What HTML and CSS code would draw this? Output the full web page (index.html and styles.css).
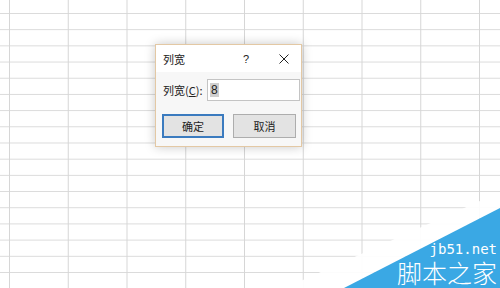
FILE: index.html
```html
<!DOCTYPE html>
<html>
<head>
<meta charset="utf-8">
<link rel="stylesheet" href="styles.css">
</head>
<body>
<div class="sheet">
  <div class="dialog">
    <div class="titlebar">
      <span class="title">列宽</span>
      <span class="help">?</span>
      <svg class="close" width="10" height="10" viewBox="0 0 10 10"><path d="M0.5 0.5 L9.5 9.5 M9.5 0.5 L0.5 9.5" stroke="#222" stroke-width="1" fill="none"/></svg>
    </div>
    <div class="row">
      <label class="label">列宽(<u>C</u>):</label>
      <div class="input"><span class="sel">8</span></div>
    </div>
    <div class="buttons">
      <div class="btn primary">确定</div>
      <div class="btn">取消</div>
    </div>
  </div>
  <div class="wm">
    <svg class="wm-bg" width="220" height="100" viewBox="0 0 220 100">
      <polygon points="5,100 220,4 220,20 64,100" fill="#ffffff" opacity="0.92"/>
      <polygon points="64,100 220,20 220,100" fill="#3aa8e4"/>
    </svg>
    <div class="wm-url">jb51.net</div>
    <div class="wm-name">脚本之家</div>
  </div>
</div>
</body>
</html>
```

FILE: styles.css
```css
html, body {
  margin: 0;
  padding: 0;
}
body {
  width: 500px;
  height: 288px;
  overflow: hidden;
  background: #fff;
  font-family: "Noto Sans CJK SC", "Noto Sans", sans-serif;
}
.sheet {
  position: relative;
  width: 500px;
  height: 288px;
  background-color: #fff;
  background-image:
    linear-gradient(to right, #d6d6d6 1px, transparent 1px),
    linear-gradient(to bottom, #dadada 1px, transparent 1px);
  background-size: 58.75px 16.2px;
  background-position: 9px 13px;
}
.dialog {
  position: absolute;
  left: 155px;
  top: 44px;
  width: 145px;
  height: 101px;
  border: 1px solid #e3c8a4;
  background: #f7f7f7;
  box-shadow: 0 0 10px rgba(0,0,0,0.22);
  display: flex;
  flex-direction: column;
  color: #222;
  font-size: 11px;
}
.titlebar {
  height: 27px;
  background: #fff;
  display: flex;
  align-items: center;
  padding-left: 7px;
}
.title {
  width: 80px;
}
.help {
  width: 36px;
  font-size: 11px;
  font-family: "Liberation Sans", sans-serif;
}
.close {
  display: block;
}
.row {
  display: flex;
  align-items: center;
  margin-top: 7px;
  padding-left: 7px;
}
.label {
  width: 44px;
}
.input {
  width: 89px;
  height: 20px;
  border: 1px solid #c4c4c4;
  background: #fff;
  display: flex;
  align-items: center;
  padding-left: 2px;
  font-family: "Liberation Sans", sans-serif;
  font-size: 12px;
}
.sel {
  background: #cfcfcf;
  padding: 0 1px;
  line-height: 14px;
}
.buttons {
  display: flex;
  gap: 9px;
  margin-top: 13px;
  padding-left: 6px;
}
.btn {
  width: 61px;
  height: 22px;
  border: 1px solid #adadad;
  background: #e3e3e3;
  display: flex;
  align-items: center;
  justify-content: center;
}
.btn.primary {
  width: 58px;
  height: 20px;
  border: 2px solid #3b7bbf;
}
.wm {
  position: absolute;
  left: 280px;
  top: 188px;
  width: 220px;
  height: 100px;
}
.wm-bg {
  position: absolute;
  left: 0;
  top: 0;
}
.wm-url {
  position: absolute;
  right: 3px;
  top: 54px;
  color: #fff;
  font-family: "DejaVu Sans Mono", monospace;
  font-size: 14px;
  line-height: 14px;
}
.wm-name {
  position: absolute;
  right: 3px;
  top: 71px;
  color: #fff;
  font-family: "Noto Sans CJK SC", sans-serif;
  font-weight: 300;
  font-size: 25px;
  line-height: 26px;
}
```
